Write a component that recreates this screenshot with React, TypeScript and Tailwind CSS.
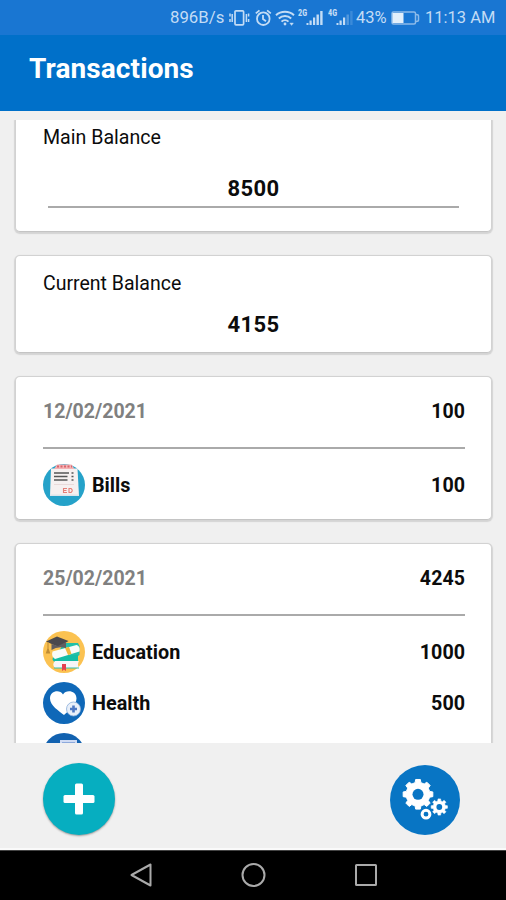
import type { ReactNode } from "react"

const Card = ({ className = "", children }: { className?: string; children: ReactNode }) => (
    <div className={`shrink-0 bg-white border border-[#d2d2d2] border-b-[#c4c4c4] rounded-[5px] shadow-[0_1px_1px_1px_#d4d4d4] ${className}`}>
        {children}
    </div>
)

const SignalIcon = ({ label, weak = false }: { label: string; weak?: boolean }) => (
    <svg width="26" height="18" viewBox="0 0 26 18" fill="#c3dcf5">
        <text x="0" y="6.5" fontSize="8.5" fontWeight="900" fontFamily="Roboto" textLength="9" lengthAdjust="spacingAndGlyphs">{label}</text>
        <rect x="8.5" y="14" width="2" height="2" />
        <rect x="11.5" y="11.5" width="2.2" height="4.5" />
        <rect x="15" y="8.5" width="2.2" height="7.5" />
        <rect x="18.5" y="5.5" width="2.4" height="10.5" opacity={weak ? 0.35 : 1} />
        <rect x="22.2" y="2" width="2.4" height="14" opacity={weak ? 0.2 : 1} />
    </svg>
)

const StatusBar = () => (
    <div className="h-[35px] bg-[#1976d2] flex items-center text-[#c3dcf5] text-[16.8px] whitespace-nowrap pl-[170px] pt-px">
        <span className="w-[59px]">896B/s</span>
        <svg className="w-[21px] mr-[5px]" height="18" viewBox="0 0 21 18" fill="none" stroke="#c3dcf5" strokeWidth="1.7">
            <rect x="6" y="1.8" width="8.6" height="14" rx="1" />
            <path d="M1 4.5v3M1 10v3M3.2 5v8M17.4 5v8M19.6 4.5v3M19.6 10v3" strokeWidth="1.5" />
        </svg>
        <svg className="w-[17px] mr-[3px]" height="18" viewBox="0 0 17 18" fill="none" stroke="#c3dcf5" strokeWidth="1.8">
            <circle cx="8.3" cy="9.7" r="6.3" />
            <path d="M.8 4.4 4.5 1.4M12.1 1.4l3.7 3M8 6v4l3 2.2" />
        </svg>
        <svg className="w-[20px] mr-[3px]" height="18" viewBox="0 0 20 18" fill="none" stroke="#c3dcf5" strokeWidth="2">
            <path d="M1 6.3c5-4.6 13-4.6 18 0M3.8 9.5c3.6-3.2 8.8-3.2 12.4 0M6.5 12.6c2-1.9 5-1.9 7 0" />
            <circle cx="10" cy="15" r="1.4" fill="#c3dcf5" stroke="none" />
            <path d="M14.8 14h3.6l-1.8 2.4z" fill="#c3dcf5" strokeWidth=".4" />
        </svg>
        <div className="w-[30px]"><SignalIcon label="2G" /></div>
        <div className="w-[28px]"><SignalIcon label="4G" weak /></div>
        <span className="w-[35px] text-[16.5px]">43%</span>
        <svg className="w-[29px] mr-[5px]" height="18" viewBox="0 0 29 18" fill="none" stroke="#8dbbe9" strokeWidth="1.5">
            <rect x="1" y="3" width="23.5" height="12" rx="1.5" />
            <path d="M25 5.5q2.5 0 2.5 1.500v4q0 1.500-2.500 1.500" />
            <rect x="1.5" y="4" width="11" height="10" fill="#e2effb" stroke="none" />
        </svg>
        <span className="text-[16.5px]">11:13 AM</span>
    </div>
)

const BillsIcon = () => (
    <svg width="42" height="42" viewBox="0 0 42 42">
        <circle cx="21" cy="21" r="21" fill="#25a2c9" />
        <path d="M8 4.5h26.5l1.5 27.5H7z" fill="#f6f0f0" />
        <path d="M7 30.5h29v1.5H7z" fill="#dde4ea" />
        <path d="M14 .5h14.5l3 4.5H11z" fill="#f4b3b5" />
        <path d="M14 2.5h15" stroke="#d9656c" strokeWidth="1.8" strokeDasharray="2 1.5" />
        <path d="M11 9h15M11 12.5h13.5M11 16h13.5M28.5 9h2M28.5 12.5h2M28.5 16h2" stroke="#555" strokeWidth="1.5" />
        <path d="M11 20.5h20" stroke="#e9dada" />
        <path d="M24 24.5h-3.5v4H24M20.5 26.5h3M26 24v5M26 24.5h2q2.5 2 0 4h-2" stroke="#e58078" strokeWidth="1.1" fill="none" />
    </svg>
)

const EducationIcon = () => (
    <svg width="42" height="42" viewBox="0 0 42 42">
        <circle cx="21" cy="21" r="21" fill="#fbc251" />
        <path d="M21 12h14l1.5 3v9l-3 2H12z" fill="#22c0a8" />
        <path d="M10.5 25.5q5-1.5 24.5-1.5v7H12q-4-2-1.5-5.5z" fill="#13bda6" />
        <path d="M12 30h24q-2 3.5 0 7H12q-3.5-3.5 0-7z" fill="#f7f5f8" />
        <path d="M11 37h25" stroke="#35bfae" />
        <path d="m9.5 20.5 24-6.5q4 1 3 6.500L12 28q-4-2.5-2.5-7.5z" fill="#f9fbfa" />
        <path d="m22 17 4-1.2 2.5 7.2-3.4 1.1z" fill="#f1b83e" />
        <path d="m3 10.5 11-5 11.5 4.5-10 6z" fill="#4b494d" />
        <path d="M8.5 13v6q6-4 14.5-2v-6l-8 4z" fill="#615d61" />
        <path d="M5 11v7M5 17.5 3.5 22h3z" stroke="#c08d35" strokeWidth="1.1" fill="#c08d35" />
        <path d="M19 33h4v7l-2-1.5-2 1.5z" fill="#e4404f" />
    </svg>
)

const HealthIcon = () => (
    <svg width="42" height="42" viewBox="0 0 42 42">
        <circle cx="21" cy="21" r="21" fill="#0f68b8" />
        <path d="M21 33C16 29 7 23.5 7 16.5 7 8.5 17 7 20 12.5 23 7 33.5 8.5 33.5 16.5 33.5 23.5 25 29 21 33z" fill="#fff" />
        <circle cx="30.5" cy="27" r="7" fill="#e8eff9" stroke="#8caedb" strokeWidth=".8" />
        <path d="M30.5 23.5v7M27 27h7" stroke="#4d78c4" strokeWidth="2.6" />
    </svg>
)

const ReportIcon = () => (
    <svg width="42" height="42" viewBox="0 0 42 42">
        <circle cx="21" cy="21" r="21" fill="#1262b0" />
        <path d="M17 7h17v27H17z" fill="#cfdbf4" />
        <path d="M19 9.5h13" stroke="#8da9dc" />
    </svg>
)

// outline of a cog with its teeth spread evenly around the centre
const gear = (cx: number, cy: number, outer: number, inner: number, teeth = 8) => {
    const step = (Math.PI * 2) / teeth
    const points: string[] = []
    for (let i = 0; i < teeth; i++) {
        const a = i * step - Math.PI / 2
        const corners = [[-0.31, inner], [-0.2, outer], [0.2, outer], [0.31, inner]]
        corners.forEach(([t, r]) => {
            points.push(`${(cx + r * Math.cos(a + t * step)).toFixed(2)} ${(cy + r * Math.sin(a + t * step)).toFixed(2)}`)
        })
    }
    return `M${points.join("L")}Z`
}

const GearsIcon = () => (
    <svg width="70" height="70" viewBox="0 0 70 70">
        <path d={gear(28, 29.3, 15, 12)} fill="#fff" stroke="#fff" strokeLinejoin="round" />
        <circle cx="28" cy="29.3" r="5.5" fill="#0875c4" />
        <path d={gear(49.3, 42, 8.2, 6.2)} fill="#fff" stroke="#fff" strokeWidth=".6" strokeLinejoin="round" />
        <circle cx="49.3" cy="42" r="2.9" fill="#0875c4" />
        <circle cx="36" cy="49.2" r="3.9" fill="none" stroke="#fff" strokeWidth="3" />
    </svg>
)

const days = [
    { date: "12/02/2021", total: 100, items: [{ name: "Bills", amount: 100, icon: <BillsIcon /> }] },
    {
        date: "25/02/2021",
        total: 4245,
        items: [
            { name: "Education", amount: 1000, icon: <EducationIcon /> },
            { name: "Health", amount: 500, icon: <HealthIcon /> },
            { name: "", amount: null, icon: <ReportIcon /> },
        ],
    },
]

export default function App() {
    return (
        <div className="w-full h-[900px] flex flex-col overflow-hidden bg-[#f0f0f0] text-[#0c0c0c] font-['Roboto',sans-serif]">
            <StatusBar />
            <div className="h-[76px] bg-[#0070c9] flex items-center pl-[29px] pb-[8px]">
                <h1 className="text-[28px] font-bold text-white tracking-[0.1px]">Transactions</h1>
            </div>

            <div className="mt-[9px] h-[623px] overflow-hidden pl-[15px] pr-[14px] flex flex-col gap-[23px]">
                <Card className="h-[112px] border-t-0 rounded-t-none px-[27px]">
                    <p className="text-[19.6px] leading-[24px] pt-[6px]">Main Balance</p>
                    <p className="mx-[5px] mt-[21px] h-[37px] border-b-2 border-[#aaa] text-center text-[22px] leading-[36px] font-bold tracking-[0.4px]">8500</p>
                </Card>
                <Card className="h-[98px] px-[27px]">
                    <p className="text-[19.5px] leading-[24px] pt-[16px]">Current Balance</p>
                    <p className="mt-[15px] text-center text-[22px] leading-[28px] font-bold tracking-[0.4px]">4155</p>
                </Card>
                {days.map((day) => (
                    <Card key={day.date} className={day.items.length > 1 ? "h-[260px] pl-[27px] pr-[26px]" : "h-[144px] pl-[27px] pr-[26px]"}>
                        <div className="h-[72px] flex items-center justify-between border-b-2 border-[#aaa] text-[19.5px] font-bold">
                            <span className="text-[#808080]">{day.date}</span>
                            <span className="tracking-[0.1px]">{day.total}</span>
                        </div>
                        <div className="flex flex-col gap-[9px] pt-[15px]">
                            {day.items.map((item, i) => (
                                <div key={i} className="h-[42px] flex items-center text-[19.8px] font-bold">
                                    {item.icon}
                                    <span className="ml-[7px] flex-1 pt-[2px]">{item.name}</span>
                                    <span className="pt-[2px] text-[19.7px]">{item.amount}</span>
                                </div>
                            ))}
                        </div>
                    </Card>
                ))}
            </div>

            <div className="h-[107px] shrink-0 flex items-center justify-between pl-[43px] pr-[46px] pb-px pt-[7px] border-b-2 border-[#fafafa]">
                <button className="size-[72px] rounded-full bg-[#06aec0] flex items-center justify-center shadow-[0_1px_2px_#999]">
                    <svg width="32" height="32" viewBox="0 0 32 32">
                        <rect x="12" y=".5" width="8" height="31" rx="1.5" fill="#fff" />
                        <rect x=".5" y="12" width="31" height="8" rx="1.5" fill="#fff" />
                    </svg>
                </button>
                <button className="size-[70px] rounded-full bg-[#0875c4] mt-[2px]">
                    <GearsIcon />
                </button>
            </div>

            <div className="h-[50px] shrink-0 bg-black border-t border-[#444] flex items-center justify-between pl-[130px] pr-[128px] pb-[2px]">
                <svg width="22" height="26" viewBox="0 0 22 26" fill="none" stroke="#aaa" strokeWidth="2" strokeLinejoin="round">
                    <path d="M1.5 13 20.5 2.5v21z" />
                </svg>
                <svg width="26" height="26" viewBox="0 0 26 26" fill="none" stroke="#aaa" strokeWidth="2">
                    <circle cx="13.5" cy="13" r="11" />
                </svg>
                <svg width="24" height="26" viewBox="0 0 24 26" fill="none" stroke="#aaa" strokeWidth="2">
                    <rect x="2" y="3" width="20" height="20" rx=".5" />
                </svg>
            </div>
        </div>
    )
}
